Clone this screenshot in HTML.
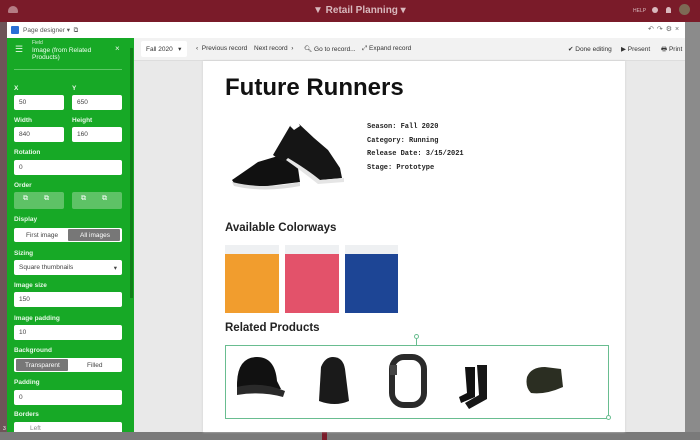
<!DOCTYPE html>
<html><head><style>
*{box-sizing:border-box;margin:0;padding:0}
body{width:700px;height:440px;overflow:hidden;position:relative;background:#7e7e7e;font-family:"Liberation Sans",sans-serif}
.a{position:absolute}
.lbl{position:absolute;left:14px;color:#e8f8e8;font-size:6.5px;font-weight:bold}
.inp{position:absolute;background:#fff;border-radius:2px;height:15px;font-size:6.5px;color:#444;padding:4px 5px}
.tb{position:absolute;top:45px;font-size:6.5px;color:#333}
.mono{position:absolute;left:367px;font-family:"Liberation Mono",monospace;font-size:7px;color:#222;font-weight:bold}
</style></head><body>
<div class="a" style="left:0;top:0;width:700px;height:22px;background:#7a1b29"></div>
<div class="a" style="left:8px;top:6px;width:10px;height:7px;background:#b57c84;border-radius:5px 5px 1px 1px"></div>
<div class="a" style="left:313px;top:5px;font-size:10px;color:#d9b9be;font-weight:bold">&#9660; Retail Planning ▾</div>
<div class="a" style="left:633px;top:8px;font-size:5px;color:#d9b9be">HELP</div>
<div class="a" style="left:652px;top:7px;width:6px;height:6px;border-radius:50%;background:#d9b9be"></div>
<div class="a" style="left:666px;top:7px;width:5px;height:6px;border-radius:3px 3px 0 0;background:#d9b9be"></div>
<div class="a" style="left:679px;top:4px;width:11px;height:11px;border-radius:50%;background:#7d6a55"></div>
<div class="a" style="left:0;top:22px;width:7px;height:410px;background:#6e5458"></div>
<div class="a" style="left:685px;top:22px;width:15px;height:410px;background:#8b8b8b"></div>
<div class="a" style="left:0;top:432px;width:700px;height:8px;background:#7a7a7a"></div>
<div class="a" style="left:322px;top:432px;width:5px;height:8px;background:#7a1b29"></div>
<!-- modal header -->
<div class="a" style="left:7px;top:22px;width:678px;height:16px;background:#fff"></div>
<div class="a" style="left:11px;top:26px;width:8px;height:8px;background:#2a6fd6;border-radius:1px"></div>
<div class="a" style="left:23px;top:26px;font-size:6.5px;color:#555">Page designer ▾ &nbsp;⧉</div>
<div class="a" style="left:648px;top:25px;font-size:7px;color:#666;letter-spacing:3px">↶↷⚙×</div>
<!-- toolbar -->
<div class="a" style="left:134px;top:38px;width:551px;height:23px;background:#f2f2f2;border-bottom:1px solid #ddd"></div>
<div class="a" style="left:141px;top:41px;width:46px;height:16px;background:#fff;border-radius:2px"></div>
<div class="tb" style="left:146px">Fall 2020 &nbsp; ▾</div>
<div class="tb" style="left:196px">‹ &nbsp;Previous record</div>
<div class="tb" style="left:254px">Next record &nbsp;›</div>
<div class="tb" style="left:304px">🔍︎ Go to record...</div>
<div class="tb" style="left:362px">⤢ Expand record</div>
<div class="tb" style="left:568px">✔ Done editing</div>
<div class="tb" style="left:621px">▶ Present</div>
<div class="tb" style="left:661px">🖶 Print</div>
<!-- canvas -->
<div class="a" style="left:134px;top:61px;width:551px;height:371px;background:#e9e9e9"></div>
<div class="a" style="left:203px;top:61px;width:422px;height:371px;background:#fff;box-shadow:0 0 2px #ccc"></div>
<div class="a" style="left:225px;top:74px;font-size:24px;font-weight:bold;color:#111">Future Runners</div>
<svg class="a" style="left:228px;top:120px" width="120" height="75" viewBox="0 0 120 75">
<path d="M4 60 L30 42 L50 36 L62 40 L70 48 L72 62 L40 66 L8 66Z" fill="#111"/>
<path d="M4 62 Q36 70 72 62 L72 66 Q36 73 6 66Z" fill="#ddd"/>
<path d="M45 35 L62 6 L70 3 L86 18 L100 30 L112 48 L114 58 L92 60 L70 46 L52 40Z" fill="#151515"/>
<path d="M60 38 Q80 50 92 60 L116 58 L116 62 L90 64 Q75 52 58 40Z" fill="#e5e5e5"/>
<path d="M62 6 L70 2 L72 6 L66 10Z" fill="#fff"/>
</svg>
<div class="mono" style="top:123px">Season:  Fall 2020</div>
<div class="mono" style="top:137px">Category: Running</div>
<div class="mono" style="top:150px">Release Date: 3/15/2021</div>
<div class="mono" style="top:164px">Stage:  Prototype</div>
<div class="a" style="left:225px;top:222px;font-size:11.5px;font-weight:bold;color:#222">Available Colorways</div>
<div class="a" style="left:225px;top:245px;width:54px;height:9px;background:#eef0f2"></div>
<div class="a" style="left:225px;top:254px;width:54px;height:59px;background:#f19d2e"></div>
<div class="a" style="left:285px;top:245px;width:54px;height:9px;background:#eef0f2"></div>
<div class="a" style="left:285px;top:254px;width:54px;height:59px;background:#e3526a"></div>
<div class="a" style="left:345px;top:245px;width:53px;height:9px;background:#eef0f2"></div>
<div class="a" style="left:345px;top:254px;width:53px;height:59px;background:#1d4595"></div>
<div class="a" style="left:225px;top:322px;font-size:11.5px;font-weight:bold;color:#222">Related Products</div>
<div class="a" style="left:225px;top:345px;width:384px;height:74px;border:1px solid #69bd90"></div>
<div class="a" style="left:416px;top:338px;width:1px;height:7px;background:#69bd90"></div>
<div class="a" style="left:414px;top:334px;width:5px;height:5px;border:1px solid #69bd90;border-radius:50%;background:#fff"></div>
<div class="a" style="left:606px;top:415px;width:5px;height:5px;border:1px solid #69bd90;border-radius:50%;background:#fff"></div>
<svg class="a" style="left:225px;top:345px" width="384" height="74" viewBox="0 0 384 74">
<path d="M12 40 Q12 12 32 12 Q50 12 52 36 L56 44 L12 46Z" fill="#111"/>
<path d="M12 42 Q36 36 60 46 L58 52 Q36 46 12 50Z" fill="#2a2a2a"/>
<path d="M96 22 Q100 12 108 12 Q118 12 120 24 L124 56 Q110 62 94 56Z" fill="#1a1a1a"/>
<rect x="167" y="12" width="32" height="48" rx="12" fill="none" stroke="#2a2a2a" stroke-width="6"/>
<rect x="165" y="20" width="7" height="10" fill="#444"/>
<path d="M240 22 L250 22 L250 52 L236 58 L234 52 L242 48Z" fill="#111"/>
<path d="M252 20 L262 20 L262 54 L244 64 L240 58 L254 50Z" fill="#161616"/>
<path d="M302 32 Q306 22 320 22 L336 24 L338 42 Q320 50 306 48 Q300 42 302 32Z" fill="#2b2e22"/>
</svg>
<!-- left panel -->
<div class="a" style="left:7px;top:38px;width:127px;height:394px;background:#17a926"></div>
<div class="a" style="left:130px;top:48px;width:3px;height:250px;background:#108019"></div>
<div class="a" style="left:15px;top:44px;font-size:9px;color:#e8f8e8">☰</div>
<div class="a" style="left:32px;top:40px;font-size:5px;color:#d8f0d8">Field</div>
<div class="a" style="left:32px;top:47px;font-size:6.5px;color:#f0fff0;line-height:7px">Image (from Related<br>Products)</div>
<div class="a" style="left:115px;top:44px;font-size:8px;color:#e8f8e8">×</div>
<div class="a" style="left:14px;top:69px;width:108px;height:1px;background:#5ec867"></div>
<div class="lbl" style="top:85px">X</div><div class="lbl" style="top:85px;left:72px">Y</div>
<div class="inp" style="left:14px;top:95px;width:50px">50</div>
<div class="inp" style="left:72px;top:95px;width:50px">650</div>
<div class="lbl" style="top:117px">Width</div><div class="lbl" style="top:117px;left:72px">Height</div>
<div class="inp" style="left:14px;top:127px;width:50px">840</div>
<div class="inp" style="left:72px;top:127px;width:50px">160</div>
<div class="lbl" style="top:149px">Rotation</div>
<div class="inp" style="left:14px;top:160px;width:108px">0</div>
<div class="lbl" style="top:182px">Order</div>
<div class="a" style="left:14px;top:192px;width:50px;height:17px;background:#5ec266;border-radius:2px;color:#fff;font-size:7px;padding:3px 9px;word-spacing:14px">⧉ ⧉</div>
<div class="a" style="left:72px;top:192px;width:50px;height:17px;background:#5ec266;border-radius:2px;color:#fff;font-size:7px;padding:3px 9px;word-spacing:14px">⧉ ⧉</div>
<div class="lbl" style="top:216px">Display</div>
<div class="a" style="left:14px;top:228px;width:108px;height:14px;background:#fff;border-radius:2px"></div>
<div class="a" style="left:68px;top:229px;width:52px;height:12px;background:#777;border-radius:1px"></div>
<div class="a" style="left:26px;top:232px;font-size:6.5px;color:#444">First image</div>
<div class="a" style="left:80px;top:232px;font-size:6.5px;color:#fff">All images</div>
<div class="lbl" style="top:250px">Sizing</div>
<div class="inp" style="left:14px;top:260px;width:108px">Square thumbnails<span style="float:right">▾</span></div>
<div class="lbl" style="top:282px">Image size</div>
<div class="inp" style="left:14px;top:292px;width:108px">150</div>
<div class="lbl" style="top:315px">Image padding</div>
<div class="inp" style="left:14px;top:325px;width:108px">10</div>
<div class="lbl" style="top:347px">Background</div>
<div class="a" style="left:14px;top:358px;width:108px;height:14px;background:#fff;border-radius:2px"></div>
<div class="a" style="left:16px;top:359px;width:52px;height:12px;background:#777;border-radius:1px"></div>
<div class="a" style="left:25px;top:362px;font-size:6.5px;color:#fff">Transparent</div>
<div class="a" style="left:87px;top:362px;font-size:6.5px;color:#444">Filled</div>
<div class="lbl" style="top:379px">Padding</div>
<div class="inp" style="left:14px;top:390px;width:108px">0</div>
<div class="lbl" style="top:411px">Borders</div>
<div class="inp" style="left:14px;top:422px;width:108px;height:10px;border-radius:2px 2px 0 0;padding:3px 16px;color:#888">Left</div>
<div class="a" style="left:3px;top:426px;font-size:5px;color:#fff">3</div>
</body></html>
